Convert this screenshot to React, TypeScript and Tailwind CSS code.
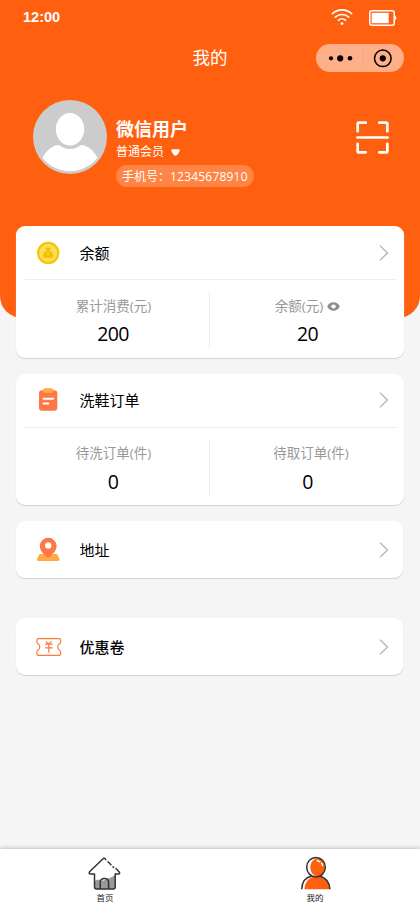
import type { ReactNode } from "react";

type Stat = { label: string; value: string; eye?: boolean };

function WifiIcon() {
	return (
		<svg width="22" height="18" viewBox="0 0 22 18" fill="none" stroke="white" strokeWidth="1.6" strokeLinecap="round">
			<path d="M1.4 5.7a14 14 0 0 1 19.2 0" />
			<path d="M4.3 9.1a9.8 9.8 0 0 1 13.4 0" />
			<path d="M7.4 12.3a5.4 5.4 0 0 1 7.2 0" />
			<circle cx="11" cy="15.6" r="1.4" fill="white" stroke="none" />
		</svg>
	);
}

function BatteryIcon() {
	return (
		<svg width="28" height="16" viewBox="0 0 28 16" fill="none">
			<rect x="0.8" y="0.8" width="24.4" height="14.4" rx="2" stroke="white" strokeWidth="1.5" />
			<rect x="2.7" y="2.8" width="17" height="10.4" fill="white" />
			<path d="M25.5 5.6c2.4.6 2.4 4.2 0 4.8z" fill="white" />
		</svg>
	);
}

function Avatar() {
	return (
		<svg width="74" height="74" viewBox="0 0 74 74">
			<circle cx="37" cy="37" r="37" fill="#cccccc" />
			<path d="M9.5 58C13 50 20 45.5 26 45c7 5.3 15 5.3 22 0 6 .5 13 5 16.5 13C50 75.5 24 75.5 9.5 58z" fill="white" />
			<ellipse cx="37" cy="29.3" rx="14.2" ry="16.2" fill="white" />
		</svg>
	);
}

function ScanIcon() {
	return (
		<svg width="33" height="33" viewBox="0 0 34 34" fill="none" stroke="white" strokeWidth="2.8" strokeLinecap="round" strokeLinejoin="round">
			<path d="M1.7 10.5V3.2q0-1.500 1.500-1.500H10" />
			<path d="M24 1.7h6.8q1.500 0 1.500 1.500v7.3" />
			<path d="M1.7 23.5v7.3q0 1.500 1.500 1.500H10" />
			<path d="M24 32.3h6.8q1.500 0 1.500-1.500v-7.3" />
			<path d="M1.5 17h31" strokeWidth="2.6" />
		</svg>
	);
}

function MoneyIcon() {
	return (
		<svg width="26" height="26" viewBox="0 0 26 26">
			<circle cx="12.2" cy="13" r="11.2" fill="#f7c704" />
			<circle cx="12.2" cy="13" r="8.9" fill="#fbdd62" />
			<path d="M9.4 7.7q1.400-.8 2.800 0 1.400-.8 2.800 0l-1.100 2.600h-3.400z" fill="#f5c000" />
			<path d="M10.5 10.600h3.400c2.500 1.700 3.700 3.500 3.500 5.200-.2 1.600-1.300 2.300-2.700 2.300H9.700c-1.400 0-2.500-.7-2.700-2.300-.2-1.700 1-3.500 3.500-5.200z" fill="#f5c000" />
			<path d="M11.2 12.500l1 1.300 1-1.300M12.200 13.800v2.600" stroke="#fbdd62" strokeWidth=".8" fill="none" />
		</svg>
	);
}

function OrderIcon() {
	return (
		<svg width="26" height="26" viewBox="0 0 26 26">
			<rect x="3" y="3.2" width="18.3" height="20.5" rx="3" fill="#ff7744" />
			<rect x="7" y="1.3" width="10.3" height="4.8" rx="2" fill="#ffab45" />
			<path d="M7.5 11.7h9.6M7.5 16.5h4.8" stroke="white" strokeWidth="2" strokeLinecap="round" />
		</svg>
	);
}

function AddressIcon() {
	return (
		<svg width="26" height="26" viewBox="0 0 26 26">
			<path d="M4.800 17h15.400q1 0 1.500 1l1.800 4.200q.5 1.800-1.400 1.800H2.400Q.5 24 1 22.200L3 18q.6-1 1.800-1z" fill="#ffab45" />
			<path d="M12.200.8a8.300 8.300 0 0 1 8.400 8.300c0 4.600-4 8.200-6.800 10.700q-1.600 1.500-3.200 0C7.800 17.300 3.800 13.700 3.800 9.100A8.300 8.300 0 0 1 12.200.8z" fill="#ff7744" />
			<circle cx="12.2" cy="8.4" r="3.2" fill="white" />
		</svg>
	);
}

function CouponIcon() {
	return (
		<svg width="26" height="26" viewBox="0 0 26 26" fill="none" stroke="#fa7a3c" strokeWidth="1.2" strokeLinejoin="round">
			<path d="M2.300 4.700h20.900q1.400 0 1.400 1.300v2.300q0 .8-.8 1.200-2.100 1.300-2.100 3.500t2.100 3.500q.8.400.8 1.200v2.300q0 1.300-1.400 1.300H2.300Q.9 21.300.9 20v-2.300q0-.8.8-1.200 2.100-1.300 2.100-3.500T1.700 9.500q-.8-.4-.8-1.200V6q0-1.300 1.400-1.300z" />
			<path d="M9.900 7.400l2.800 2.700 2.800-2.700M9 10.200h7.700M9 13.800h7.700M12.800 10.200v8.600" />
		</svg>
	);
}

function EyeIcon() {
	return (
		<svg width="13" height="9" viewBox="0 0 13 9">
			<path d="M.2 4.500C1.200 1.800 3.800.3 6.500.3s5.300 1.500 6.300 4.200C11.800 7.200 9.200 8.700 6.500 8.700S1.200 7.200.2 4.500z" fill="#8e8e8e" />
			<ellipse cx="6.5" cy="4.5" rx="2.3" ry="2" fill="white" />
		</svg>
	);
}

function ArrowIcon() {
	return (
		<svg width="10" height="16" viewBox="0 0 10 16" fill="none" stroke="#b8b8b8" strokeWidth="1.4">
			<path d="M1 .8L8.500 8 1 15.200" />
		</svg>
	);
}

function HomeIcon() {
	return (
		<svg width="34" height="36" viewBox="0 0 34 36" fill="none" stroke="#333333" strokeWidth="1.5" strokeLinecap="round" strokeLinejoin="round">
			<path d="M7 25c4-3 6 1 10-1s6-2 10-5v14H7z" fill="#999999" stroke="none" />
			<path d="M17.800 3.800Q16.500 1 14.500 3.200L1.800 15.500q-1.700 2.600 1 2.600h3.700V31q0 2 2 2h16.700q2 0 2-2V18.100h3q2.300-.4 1-2.200l-3.200-3.300" />
			<path d="M20 5.800l3 3M25 10.800l.6.6" />
			<path d="M12.200 32.500V26.500q0-4 4.200-4t4.200 4v6" />
		</svg>
	);
}

function UserIcon() {
	return (
		<svg width="34" height="36" viewBox="0 0 34 36" fill="none" strokeLinecap="round">
			<ellipse cx="19.5" cy="11.3" rx="7.2" ry="9" fill="#ff6010" />
			<path d="M6.500 33.300c.5-8 5-12.700 12.500-12.700S31.500 25.300 32.500 33.300z" fill="#ff6010" />
			<ellipse cx="18" cy="11.2" rx="9.3" ry="9.8" stroke="#333333" strokeWidth="1.5" />
			<path d="M3.800 32.800c.2-7 3.400-11.300 9.500-12.600M22.500 20.200c5.300 1.700 8.800 6 9.300 12.300" stroke="#333333" strokeWidth="1.5" />
			<path d="M19.200 4.500l2.600 1.300M23.600 7.200q.8 1 1 2.300" stroke="white" strokeWidth="1.4" />
		</svg>
	);
}

function Card({
	icon,
	title,
	medium,
	stats,
}: {
	icon: ReactNode;
	title: string;
	medium?: boolean;
	stats?: Stat[];
}) {
	return (
		<section className={`rounded-[9px] bg-white shadow-[0_1px_1px_#d2d2d2] ${stats ? "h-[131.5px]" : "mr-px h-[57px]"}`}>
			<div className={`flex items-center pl-5 ${stats ? "h-[53px] pr-[15px]" : "h-full pr-3.5"}`}>
				{icon}
				<h2
					className={`ml-[17.5px] flex-1 text-[15px] leading-5 text-black ${
						medium ? "font-medium" : "font-normal"
					}`}
				>
					{title}
				</h2>
				<ArrowIcon />
			</div>
			{stats && (
				<div className="ml-[9px] mr-2 flex h-[78px] border-t border-[#eeeeee] pt-3">
					{stats.map((stat, index) => (
						<div
							key={stat.label}
							className={`flex h-[56px] flex-col items-center ${
								index === 0 ? "w-[185px] border-r border-[#eeeeee]" : "w-[186px] pl-[9px]"
							}`}
						>
							<div
								className={`flex h-8 items-center gap-1 text-[13.5px] text-[#999999] ${
									index === 0 ? "pr-[7px]" : ""
								}`}
							>
								<span className={index === 0 || stat.eye ? "" : "pl-[7px]"}>{stat.label}</span>
								{stat.eye && <EyeIcon />}
							</div>
							<div
								className={`text-[19.5px] leading-7 tracking-[-0.6px] text-black ${
									index === 0 ? "pr-[8px]" : ""
								}`}
							>
								{stat.value}
							</div>
						</div>
					))}
				</div>
			)}
		</section>
	);
}

export default function App() {
	return (
		<div className="flex h-[909px] w-[420px] flex-col overflow-hidden bg-[#f5f5f5] font-['Open_Sans','Noto_Sans_CJK_SC',sans-serif]">
			<header className="h-[318px] shrink-0 rounded-b-[22px] bg-[#ff6010] text-white">
				<div className="flex h-[34px] items-center px-[23px]">
					<span className="flex-1 pb-px font-['Liberation_Sans',sans-serif] text-[14.5px] font-bold leading-4">
						12:00
					</span>
					<WifiIcon />
					<div className="ml-4 pt-px">
						<BatteryIcon />
					</div>
				</div>
				<div className="grid h-12 grid-cols-[1fr_auto_1fr] items-center pr-4">
					<span />
					<h1 className="pb-0.5 pl-4 text-[17.5px] leading-6">我的</h1>
					<div className="flex h-7 w-[88px] items-center justify-self-end rounded-full bg-[#ffaf88]">
						<svg width="88" height="28" viewBox="0 0 88 28">
							<circle cx="15" cy="14.3" r="2.1" />
							<circle cx="24.2" cy="14.3" r="3.1" />
							<circle cx="34" cy="14.3" r="2.3" />
							<path d="M47 6v17" stroke="#d9b09a" />
							<circle cx="66.8" cy="14.3" r="8.3" fill="none" stroke="black" strokeWidth="1.5" />
							<circle cx="66.8" cy="14.3" r="3.1" />
						</svg>
					</div>
				</div>
				<div className="flex pl-[33px] pr-[31px] pt-[18px]">
					<Avatar />
					<div className="ml-[9px] flex-1 pt-[17px]">
						<div className="text-[18px] font-bold leading-6">微信用户</div>
						<div className="flex h-[22px] items-center gap-[7px] text-[12px]">
							普通会员
							<svg width="9" height="7" viewBox="0 0 9 7" fill="white">
								<path d="M1.800.2h5.400q1.800 0 1.500 1.900Q7.500 5 5.300 6.600q-.8.500-1.600 0Q1.500 5 .3 2.100 0 .2 1.800.2z" />
							</svg>
						</div>
						<div className="mt-0.5 flex h-[22px] w-[138px] items-center whitespace-nowrap rounded-full bg-[#ff8546] pl-1.5 pt-px text-[12px]">
							手机号：<span className="tracking-[0.2px]">12345678910</span>
						</div>
					</div>
					<div className="pt-[21px]">
						<ScanIcon />
					</div>
				</div>
			</header>
			<main className="relative -mt-[92px] flex flex-1 flex-col gap-4 px-4">
				<Card
					icon={<MoneyIcon />}
					title="余额"
					stats={[
						{ label: "累计消费(元)", value: "200" },
						{ label: "余额(元)", value: "20", eye: true },
					]}
				/>
				<Card
					icon={<OrderIcon />}
					title="洗鞋订单"
					stats={[
						{ label: "待洗订单(件)", value: "0" },
						{ label: "待取订单(件)", value: "0" },
					]}
				/>
				<Card icon={<AddressIcon />} title="地址" />
				<div className="mt-6">
					<Card icon={<CouponIcon />} title="优惠卷" medium />
				</div>
			</main>
			<nav className="relative flex h-[60px] shrink-0 bg-white text-[8.5px] leading-3 text-[#222222] shadow-[0_-1px_4px_rgba(0,0,0,0.22)]">
				<a className="flex flex-1 flex-col items-center pt-[7px]">
					<HomeIcon />
					首页
				</a>
				<a className="flex flex-1 flex-col items-center pt-[7px]">
					<UserIcon />
					我的
				</a>
			</nav>
		</div>
	);
}
